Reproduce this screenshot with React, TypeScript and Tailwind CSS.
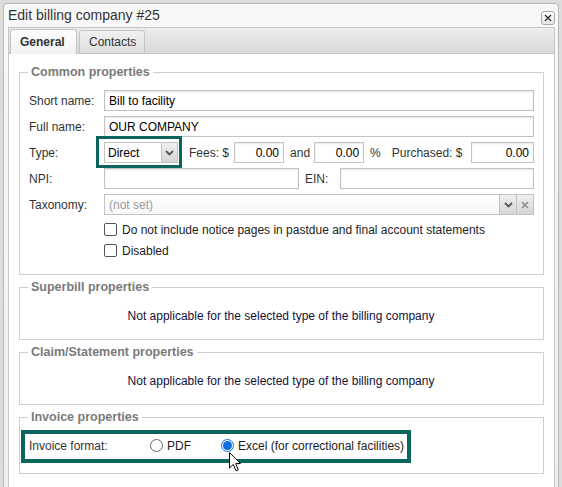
import type { ReactNode } from "react";
import clsx from "clsx";

// Edit billing company dialog — General tab, with the two teal call-out boxes.

function Field({ value, right, muted, className }: { value?: string; right?: boolean; muted?: boolean; className?: string }) {
  return (
    <div
      className={clsx(
        "flex h-[21px] items-center border border-[#c2c2c2] bg-white text-[12px] shadow-[inset_0_1px_2px_rgba(0,0,0,0.1)]",
        right ? "justify-end pr-[4px]" : "pl-[4px]",
        muted ? "text-[#999]" : "text-black",
        className,
      )}
    >
      {value}
    </div>
  );
}

function Label({ children, className }: { children: ReactNode; className?: string }) {
  return <span className={clsx("shrink-0 text-[12px] text-[#333]", className)}>{children}</span>;
}

function Chevron() {
  return (
    <svg width="9" height="6" viewBox="0 0 9 6" className="text-[#555]">
      <path d="M1 1 L4.5 4.5 L8 1" fill="none" stroke="currentColor" strokeWidth="1.8" />
    </svg>
  );
}

function Group({ title, children, className }: { title: string; children: ReactNode; className?: string }) {
  return (
    <fieldset className={clsx("border border-[#cfcfcf] pl-[8px] pr-[9px]", className)}>
      <legend className="px-[3px] text-[12.5px] font-bold leading-[16px] text-[#7a7a7a]">{title}</legend>
      {children}
    </fieldset>
  );
}

function Checkbox({ label }: { label: string }) {
  return (
    <div className="flex h-[21px] items-center gap-[5px] pl-[76px]">
      <span className="h-[13px] w-[13px] rounded-[2px] border border-[#555] bg-white" />
      <span className="text-[12px] text-[#222]">{label}</span>
    </div>
  );
}

function Radio({ label, checked }: { label: string; checked?: boolean }) {
  return (
    <div className="flex items-center gap-[4px]">
      {checked ? (
        <span className="flex h-[13px] w-[13px] items-center justify-center rounded-full border border-[#0a6fe0] bg-white">
          <span className="h-[9px] w-[9px] rounded-full bg-[#0a6fe0]" />
        </span>
      ) : (
        <span className="h-[13px] w-[13px] rounded-full border border-[#666] bg-white" />
      )}
      <span className="text-[12px] text-[#222]">{label}</span>
    </div>
  );
}

const NA = "Not applicable for the selected type of the billing company";

export default function App() {
  return (
    <div className="relative h-[487px] w-[562px] overflow-hidden bg-[#dcdcdc] pt-[3px] pl-[3px] font-['Liberation_Sans',Arial,sans-serif]">
      <div className="h-[520px] w-[556px] rounded-t-[4px] border border-[#b9b9b9] bg-linear-to-b from-[#f8f8f8] to-[#efefef]">
        {/* title bar */}
        <div className="flex h-[23px] items-center justify-between pl-[4px] pr-[3px]">
          <span className="text-[14px] text-[#333]">Edit billing company #25</span>
          <button className="mt-[4px] flex h-[14px] w-[14px] items-center justify-center rounded-[3px] border border-[#a9a9a9] bg-linear-to-b from-[#fbfbfb] to-[#e6e6e6]">
            <svg width="8" height="8" viewBox="0 0 8 8">
              <path d="M1 1 L7 7 M7 1 L1 7" stroke="#333" strokeWidth="1.4" />
            </svg>
          </button>
        </div>

        {/* tab panel */}
        <div className="ml-[4px] h-[480px] w-[547px] border border-[#c5c5c5] bg-white">
          <div className="flex h-[26px] items-end gap-[2px] border-b border-[#c5c5c5] bg-linear-to-b from-[#ededed] to-[#d9d9d9] pl-[1px]">
            <div className="-mb-px flex h-[25px] w-[67px] items-center rounded-t-[3px] border border-b-0 border-[#c5c5c5] bg-linear-to-b from-[#fdfdfd] to-[#f2f2f2] pl-[9px] text-[12px] font-bold text-[#333]">
              General
            </div>
            <div className="flex h-[23px] w-[66px] items-center rounded-t-[3px] border border-b-0 border-[#c5c5c5] bg-linear-to-b from-[#f1f1f1] to-[#dedede] pl-[9px] text-[12px] text-[#333]">
              Contacts
            </div>
          </div>

          <div className="px-[10px] pt-[10px]">
            <Group title="Common properties" className="pb-[13px]">
              <div className="flex flex-col gap-[5px] pt-[10px]">
                <div className="flex items-center">
                  <Label className="w-[76px] pl-[1px]">Short name:</Label>
                  <Field value="Bill to facility" className="flex-1" />
                </div>
                <div className="flex items-center">
                  <Label className="w-[76px] pl-[1px]">Full name:</Label>
                  <Field value="OUR COMPANY" className="flex-1" />
                </div>
                <div className="flex items-center">
                  <Label className="w-[76px] pl-[1px]">Type:</Label>
                  <div className="relative">
                    <div className="flex h-[21px] w-[74px] border border-[#c2c2c2] bg-white">
                      <span className="flex flex-1 items-center pl-[3px] text-[12px] text-black">Direct</span>
                      <span className="flex w-[16px] items-center justify-center border-l border-[#c2c2c2] bg-linear-to-b from-[#f0f0f0] to-[#d6d6d6]">
                        <Chevron />
                      </span>
                    </div>
                    <div className="pointer-events-none absolute -top-[6px] -right-[4px] -bottom-[5px] -left-[8px] border-[3px] border-[#0b655f]" />
                  </div>
                  <Label className="ml-[11px]">Fees: $</Label>
                  <Field value="0.00" right className="ml-[5px] w-[50px]" />
                  <Label className="ml-[6px]">and</Label>
                  <Field value="0.00" right className="ml-[4px] w-[50px]" />
                  <Label className="ml-[6px]">%</Label>
                  <Label className="ml-[11px]">Purchased: $</Label>
                  <Field value="0.00" right className="ml-[9px] flex-1" />
                </div>
                <div className="flex items-center">
                  <Label className="w-[76px] pl-[1px]">NPI:</Label>
                  <Field className="w-[195px]" />
                  <Label className="ml-[6px]">EIN:</Label>
                  <Field className="ml-[12px] flex-1" />
                </div>
                <div className="flex items-center">
                  <Label className="w-[76px] pl-[1px]">Taxonomy:</Label>
                  <div className="flex h-[21px] flex-1 border border-[#c2c2c2] bg-linear-to-b from-white to-[#f6f6f6]">
                    <span className="flex flex-1 items-center pl-[4px] text-[12px] text-[#9a9a9a]">(not set)</span>
                    <span className="flex w-[17px] items-center justify-center border-l border-[#c2c2c2] bg-linear-to-b from-[#f0f0f0] to-[#d6d6d6]">
                      <Chevron />
                    </span>
                    <span className="flex w-[17px] items-center justify-center border-l border-[#c2c2c2] bg-linear-to-b from-[#f0f0f0] to-[#d6d6d6]">
                      <svg width="8" height="8" viewBox="0 0 8 8">
                        <path d="M1 1 L7 7 M7 1 L1 7" stroke="#888" strokeWidth="1.5" />
                      </svg>
                    </span>
                  </div>
                </div>
              </div>
              <div className="mt-[4px]">
                <Checkbox label="Do not include notice pages in pastdue and final account statements" />
                <Checkbox label="Disabled" />
              </div>
            </Group>

            <Group title="Superbill properties" className="mt-[4px] pt-[13px] pb-[15px]">
              <p className="text-center text-[12px] leading-[16px] text-[#12123a]">{NA}</p>
            </Group>

            <Group title="Claim/Statement properties" className="mt-[4px] pt-[13px] pb-[15px]">
              <p className="text-center text-[12px] leading-[16px] text-[#12123a]">{NA}</p>
            </Group>

            <Group title="Invoice properties" className="mt-[4px] pt-[10px] pb-[17px]">
              <div className="relative flex h-[21px] items-center">
                <Label className="w-[122px] pl-[1px]">Invoice format:</Label>
                <Radio label="PDF" />
                <div className="ml-[30px]">
                  <Radio label="Excel (for correctional facilities)" checked />
                </div>
                <div className="pointer-events-none absolute -top-[5px] -left-[7px] h-[33px] w-[390px] border-[4px] border-[#0b655f]" />
              </div>
            </Group>
          </div>
        </div>
      </div>

      {/* mouse pointer */}
      <svg className="pointer-events-none absolute top-[452px] left-[229px]" width="13" height="20" viewBox="0 0 13 20">
        <path d="M0.5 0.5 L0.5 16 L4.3 12.4 L7 18.8 L9.3 17.8 L6.7 11.6 L11.5 11.6 Z" fill="white" stroke="black" strokeWidth="1" />
      </svg>
    </div>
  );
}
